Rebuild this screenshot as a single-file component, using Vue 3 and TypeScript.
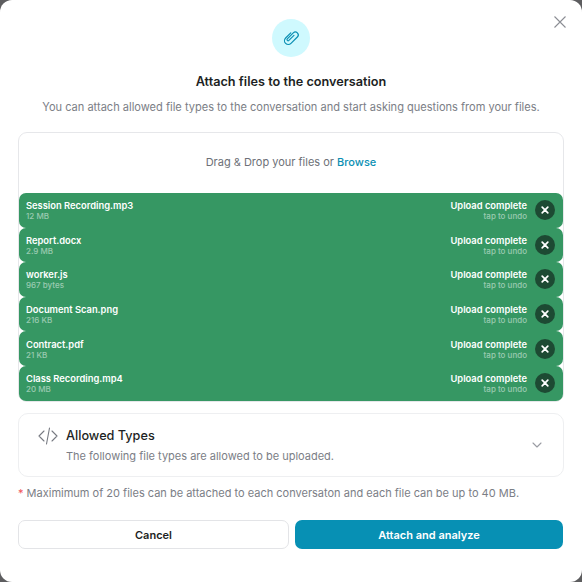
<script setup lang="ts">
interface UploadFile { name: string; size: string }
const files: UploadFile[] = [
  { name: 'Session Recording.mp3', size: '12 MB' },
  { name: 'Report.docx', size: '2.9 MB' },
  { name: 'worker.js', size: '967 bytes' },
  { name: 'Document Scan.png', size: '216 KB' },
  { name: 'Contract.pdf', size: '21 KB' },
  { name: 'Class Recording.mp4', size: '20 MB' },
]
</script>

<template>
  <div class="modal">
    <button class="close" aria-label="Close">
      <svg width="14" height="14" viewBox="0 0 14 14" fill="none" stroke="#8b8d94" stroke-width="1.1">
        <path d="M1.5 1.5l11 11M12.5 1.5l-11 11" />
      </svg>
    </button>
    <div class="badge">
      <svg width="22" height="22" viewBox="0 0 22 22" fill="none" stroke="#0b8fb3" stroke-width="1.2" stroke-linecap="round" stroke-linejoin="round">
        <path d="M7.2 7.5v7.3a3.8 3.8 0 0 0 7.6 0V5.8a2.9 2.9 0 0 0-5.8 0v8.4a1.1 1.1 0 0 0 2.2 0V7" transform="rotate(45 11 11)" />
      </svg>
    </div>
    <h1 class="title">Attach files to the conversation</h1>
    <p class="subtitle">You can attach allowed file types to the conversation and start asking questions from your files.</p>

    <section class="dropzone">
      <p class="drop-label">Drag &amp; Drop your files or <a class="browse">Browse</a></p>
      <ul class="files">
        <li v-for="file in files" :key="file.name" class="file">
          <div class="info">
            <span class="name">{{ file.name }}</span>
            <span class="meta">{{ file.size }}</span>
          </div>
          <div class="status">
            <span class="name">Upload complete</span>
            <span class="meta">tap to undo</span>
          </div>
          <button class="remove" aria-label="Remove">
            <svg width="8" height="8" viewBox="0 0 8 8" fill="none" stroke="#fff" stroke-width="1.7" stroke-linecap="round">
              <path d="M1.2 1.2l5.6 5.6M6.8 1.2l-5.6 5.6" />
            </svg>
          </button>
        </li>
      </ul>
    </section>

    <section class="allowed">
      <svg class="code" width="20" height="18" viewBox="0 0 20 18" fill="none" stroke="#777a82" stroke-width="1.1" stroke-linecap="round" stroke-linejoin="round">
        <path d="M6 4 1 9l5 5M14 4l5 5-5 5M11.5 1 8.5 17" />
      </svg>
      <div class="allowed-text">
        <h2>Allowed Types</h2>
        <p>The following file types are allowed to be uploaded.</p>
      </div>
      <svg class="chev" width="10" height="6" viewBox="0 0 10 6" fill="none" stroke="#9a9ca3" stroke-width="1.1" stroke-linecap="round" stroke-linejoin="round">
        <path d="M1 1l4 4 4-4" />
      </svg>
    </section>

    <p class="note"><span class="star">*</span> Maximimum of 20 files can be attached to each conversaton and each file can be up to 40 MB.</p>

    <div class="actions">
      <button class="btn cancel">Cancel</button>
      <button class="btn primary">Attach and analyze</button>
    </div>
  </div>
</template>

<style>
html, body { margin: 0; background: #5d5d5f; }
</style>

<style scoped>
* { box-sizing: border-box; }
.modal {
  position: relative;
  width: 582px;
  height: 582px;
  background: #fff;
  border-radius: 12px;
  padding: 19px 18px 0;
  display: flex;
  flex-direction: column;
  align-items: stretch;
  font-family: Inter, "Liberation Sans", sans-serif;
  overflow: hidden;
}
.close {
  position: absolute;
  top: 15px;
  right: 15px;
  padding: 0;
  border: 0;
  background: none;
  line-height: 0;
}
.badge {
  width: 38px;
  height: 38px;
  border-radius: 50%;
  background: #cff9fe;
  align-self: center;
  display: flex;
  align-items: center;
  justify-content: center;
}
.title {
  margin: 16px 0 0;
  font-size: 12.7px;
  line-height: 18px;
  font-weight: 600;
  color: #1d1f24;
  text-align: center;
}
.subtitle {
  margin: 8px 0 0;
  font-size: 11.05px;
  line-height: 16px;
  color: #7b7e86;
  text-align: center;
  white-space: nowrap;
}
.dropzone {
  margin-top: 17px;
  border: 1px solid #e6e7ea;
  border-radius: 9px;
  height: 270px;
  display: flex;
  flex-direction: column;
}
.drop-label {
  margin: 0;
  height: 60px;
  padding-top: 21px;
  font-size: 11px;
  line-height: 16px;
  color: #6d7077;
  text-align: center;
}
.browse { color: #0b8fb3; font-weight: 500; }
.files {
  list-style: none;
  margin: 0;
  padding: 0;
  display: flex;
  flex-direction: column;
}
.file {
  height: 34.6px;
  background: #369763;
  border-radius: 7px;
  display: flex;
  align-items: center;
  padding: 0 8px 0 7px;
  color: #fff;
}
.info, .status {
  display: flex;
  flex-direction: column;
}
.info { flex: 1; }
.status { align-items: flex-end; margin-right: 8px; }
.name {
  font-size: 9.35px;
  line-height: 13px;
  font-weight: 600;
}
.meta {
  font-size: 8px;
  line-height: 9px;
  font-weight: 500;
  color: rgba(255, 255, 255, .5);
}
.remove {
  width: 20px;
  height: 20px;
  padding: 0;
  border: 0;
  border-radius: 50%;
  background: #1d4a33;
  display: flex;
  align-items: center;
  justify-content: center;
}
.allowed {
  margin-top: 11px;
  height: 64px;
  border: 1px solid #eeeff1;
  border-radius: 10px;
  display: flex;
  align-items: flex-start;
  padding: 13px 21px 0 19px;
}
.code { flex: none; }
.allowed-text { flex: 1; margin-left: 8px; }
.allowed-text h2 {
  margin: 0;
  font-size: 12.7px;
  line-height: 18px;
  font-weight: 500;
  color: #1d1f24;
}
.allowed-text p {
  margin: 3px 0 0;
  font-size: 11px;
  line-height: 16px;
  color: #7b7e86;
}
.chev { margin-top: 15px; flex: none; }
.note {
  margin: 8px 0 0;
  font-size: 11px;
  line-height: 16px;
  color: #7b7e86;
  white-space: nowrap;
}
.star { color: #f0525a; }
.actions {
  margin-top: 19px;
  display: flex;
  gap: 6px;
}
.btn {
  height: 29px;
  border-radius: 7px;
  font-family: inherit;
  font-size: 11px;
  font-weight: 600;
  padding: 0;
}
.cancel {
  width: 271px;
  background: #fff;
  border: 1px solid #e3e4e7;
  color: #1d1f24;
}
.primary {
  flex: 1;
  margin-right: 1px;
  background: #0790b4;
  border: 0;
  color: #fff;
}
</style>
